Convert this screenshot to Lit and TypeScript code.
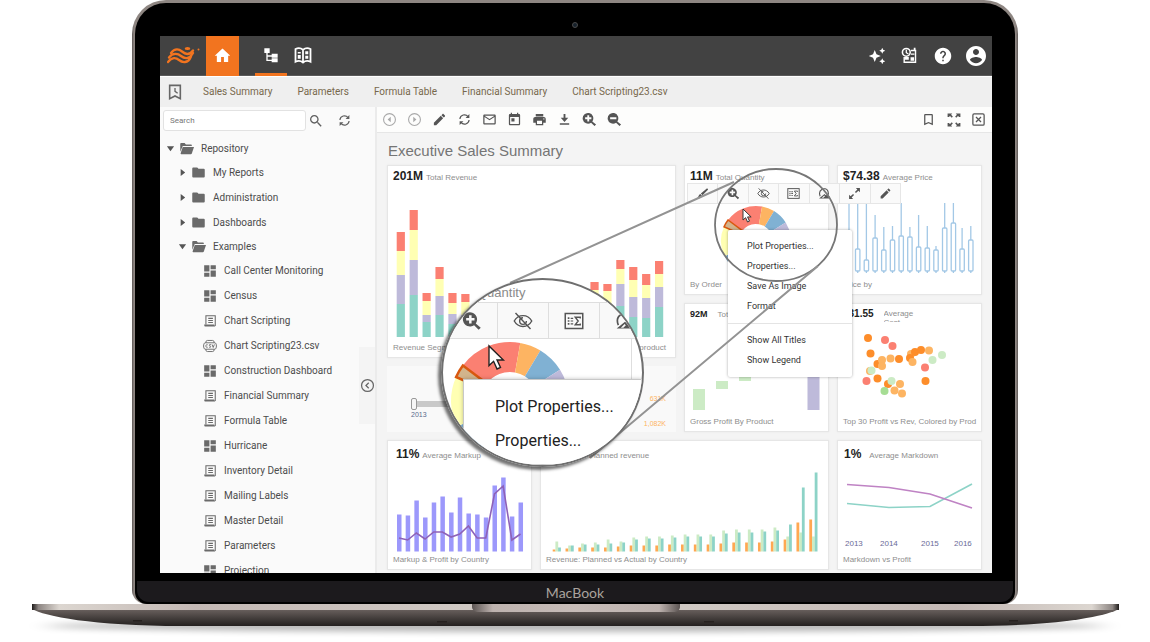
import { LitElement, html, svg, css, nothing, TemplateResult, SVGTemplateResult } from "lit";
import { customElement, property } from "lit/decorators.js";

const ICONS: Record<string, SVGTemplateResult> = {
  home: svg`<path d="M10 21v-7h4v7h6v-8.500h3L12 2 1 12.500h3V21z"/>`,
  tree: svg`<path d="M2 2h8v7H7v3.500h6V10h9v6h-9v-1.500H7V19h6v-2h9v6h-9v-2H5V9H2z"/>`,
  book: svg`<path fill="none" stroke="currentColor" stroke-width="2.400" d="M12 5C9 2.500 5 2.500 2 4v17c3-1.500 7-1.500 10 1 3-2.500 7-2.500 10-1V4c-3-1.500-7-1.500-10 1zM12 5v17"/><path d="M5 8h4v2H5zM5 12h4v5H5zM15 7h4v4h-4zM15 13h4v4h-4z"/>`,
  sparkle: svg`<path d="M9 4l2.300 5.700L17 12l-5.700 2.300L9 20l-2.300-5.700L1 12l5.700-2.300zM19 1l1.200 2.800L23 5l-2.800 1.200L19 9l-1.200-2.800L15 5l2.800-1.200zM19 15l1.200 2.800L23 19l-2.800 1.200L19 23l-1.200-2.800L15 19l2.800-1.200z"/>`,
  schedule: svg`<path fill="none" stroke="currentColor" stroke-width="2" d="M14 5h6.500v16.500h-16V14"/><path d="M18 1h2.500v4H18zM5 14h6v4H5z"/><circle cx="7.500" cy="7.500" r="5.500" fill="none" stroke="currentColor" stroke-width="2.200"/><path fill="none" stroke="currentColor" stroke-width="1.800" d="M7.500 4v4l3 2"/><path d="M13.500 14.500h5v5h-5zM14 9h5v2h-5z"/>`,
  help: svg`<path d="M12 1C5.900 1 1 5.900 1 12s4.900 11 11 11 11-4.900 11-11S18.100 1 12 1zm1 18h-2v-2h2v2zm2.100-7.700l-.9.900C13.400 12.900 13 13.500 13 15h-2v-.5c0-1.100.4-2.100 1.200-2.800l1.200-1.300c.4-.4.600-.9.600-1.400 0-1.100-.9-2-2-2s-2 .9-2 2H8c0-2.200 1.800-4 4-4s4 1.800 4 4c0 .9-.4 1.700-.9 2.300z"/>`,
  account: svg`<path d="M12 2C6.480 2 2 6.480 2 12s4.480 10 10 10 10-4.480 10-10S17.520 2 12 2zm0 3c1.660 0 3 1.340 3 3s-1.340 3-3 3-3-1.340-3-3 1.340-3 3-3zm0 14.200c-2.500 0-4.710-1.280-6-3.220.03-1.990 4-3.080 6-3.080 1.990 0 5.970 1.090 6 3.080-1.290 1.940-3.500 3.220-6 3.220z"/>`,
  recent: svg`<path fill="none" stroke="currentColor" stroke-width="2.400" d="M4 2h16v20l-8-4-8 4z"/><path fill="none" stroke="currentColor" stroke-width="2" d="M12 6v5l4 3"/>`,
  search: svg`<path d="M15.500 14h-.79l-.28-.27C15.410 12.590 16 11.110 16 9.500 16 5.910 13.090 3 9.500 3S3 5.910 3 9.500 5.910 16 9.500 16c1.610 0 3.090-.59 4.230-1.570l.27.28v.79l5 4.990L20.490 19l-4.990-5zm-6 0C7.010 14 5 11.990 5 9.500S7.010 5 9.500 5 14 7.010 14 9.500 11.990 14 9.500 14z"/>`,
  refresh: svg`<path fill="none" stroke="currentColor" stroke-width="2.200" d="M3.500 11A8.500 8.500 0 0 1 18.500 6.500M20.500 13A8.500 8.500 0 0 1 5.500 17.500"/><path d="M21 2v7h-7zM3 22v-7h7z"/>`,
  prev: svg`<circle cx="12" cy="12" r="9.500" fill="none" stroke="currentColor" stroke-width="1.800"/><path d="M14 7.500v9L9 12z"/>`,
  next: svg`<circle cx="12" cy="12" r="9.500" fill="none" stroke="currentColor" stroke-width="1.800"/><path d="M10 7.500v9l5-4.500z"/>`,
  edit: svg`<path d="M3 17.250V21h3.750L17.810 9.940l-3.750-3.750L3 17.250zM20.710 7.040c.39-.39.39-1.020 0-1.410l-2.340-2.340c-.39-.39-1.020-.39-1.410 0l-1.830 1.830 3.750 3.750 1.830-1.830z"/>`,
  mail: svg`<path d="M22 6c0-1.100-.9-2-2-2H4c-1.100 0-2 .9-2 2v12c0 1.100.9 2 2 2h16c1.100 0 2-.9 2-2V6zm-2 0l-8 5-8-5h16zm0 12H4V8l8 5 8-5v10z"/>`,
  event: svg`<path d="M19 3h-1V1h-2v2H8V1H6v2H5c-1.110 0-1.990.9-1.990 2L3 19c0 1.100.89 2 2 2h14c1.100 0 2-.9 2-2V5c0-1.100-.9-2-2-2zm0 16H5V8h14v11zM7 10h5v5H7z"/>`,
  print: svg`<path d="M19 8H5c-1.660 0-3 1.340-3 3v6h4v4h12v-4h4v-6c0-1.660-1.340-3-3-3zm-3 11H8v-5h8v5zm3-7c-.55 0-1-.45-1-1s.45-1 1-1 1 .45 1 1-.45 1-1 1zm-1-9H6v4h12V3z"/>`,
  download: svg`<path d="M18 9h-4.500V3h-3v6H6l6 7 6-7zM4.500 18v2.500h15V18z"/>`,
  zoomin: svg`<path d="M16.500 15A8.500 8.500 0 1 0 14.500 17L20 22.500l2.500-2.500zM8.500 5h3v3.500H15v3h-3.500V15h-3v-3.500H5v-3h3.500z"/>`,
  zoomout: svg`<path d="M16.500 15A8.500 8.500 0 1 0 14.500 17L20 22.500l2.500-2.500zM5 8.500h10v3H5z"/>`,
  bookmark: svg`<path d="M17 3H7c-1.100 0-1.990.9-1.990 2L5 21l7-3 7 3V5c0-1.100-.9-2-2-2zm0 15l-5-2.180L7 18V5h10v13z"/>`,
  full: svg`<path d="M1 1h8L7 3.200l3 3L8.200 8l-3-3L3 7v0H1zM23 1h-8l2 2.200-3 3L15.800 8l3-3L21 7h2zM1 23h8l-2-2.200 3-3L8.200 16l-3 3L3 17H1zM23 23h-8l2-2.200-3-3 1.800-1.800 3 3 2.200-2h2z"/>`,
  close: svg`<rect x="3" y="3" width="18" height="18" rx="2" fill="none" stroke="currentColor" stroke-width="2"/><path fill="none" stroke="currentColor" stroke-width="2" d="M8 8l8 8M16 8l-8 8"/>`,
  folder: svg`<path d="M10 4H3.500C2.600 4 2 4.600 2 5.500v13c0 .9.600 1.500 1.500 1.500h17c.9 0 1.500-.6 1.500-1.500v-11c0-.9-.6-1.500-1.500-1.500H12z"/>`,
  folderopen: svg`<path d="M2 17V4.500C2 3.600 2.600 3 3.500 3H9l2 2.500h8c.8 0 1.500.7 1.500 1.500v1H6z"/><path d="M6 9.500h18L20.500 20c-.2.600-.8 1-1.500 1H3.500c-.5 0-1-.3-1-1z"/>`,
  dash: svg`<path d="M2 2h9v11H2zM2 15h9v7H2zM13 2h9v7h-9zM13 11h9v11h-9z"/>`,
  report: svg`<path fill="none" stroke="currentColor" stroke-width="1.800" d="M5 18V3h16v17.500M9 7.500h8M9 11h8M9 14.500h8"/><path d="M2 18h17l2 3.500H4c-1.300 0-2-1.500-2-3.500z"/>`,
  csv: svg`<path fill="none" stroke="currentColor" stroke-width="1.600" d="M5 6.500V5c0-1.500 1-2.500 2.500-2.500h9C18 2.500 19 3.500 19 5v1.500M5 17.500V19c0 1.500 1 2.500 2.500 2.500h9c1.500 0 2.500-1 2.500-2.500v-1.500M3.500 6.500h17c1.500 0 2.500 3 2.500 5.500s-1 5.500-2.500 5.500h-17C2 17.500 1 14.500 1 12s1-5.500 2.500-5.500zM8 10c-1.200-1-3-.2-3 2s1.800 3 3 2M13.500 9.700c-3-1-4 1.300-1.700 2.100 2.700.8 1.700 3.400-1.300 2.200M15.500 9.300l2 5.200 2-5.200"/>`,
  collapse: svg`<circle cx="12" cy="12" r="9.500" fill="none" stroke="currentColor" stroke-width="2"/><path fill="none" stroke="currentColor" stroke-width="2" d="M14 7.500L9.500 12l4.500 4.500"/>`,
  brush: svg`<path d="M20.500 2.500l2 2L12 15l-3-3zM8 13l3 3c-1 4-5 5.500-9 4.500 3-1.500 2.500-6.500 6-7.500z"/>`,
  eyeoff: svg`<path fill="none" stroke="currentColor" stroke-width="1.700" d="M1.500 12C4 7.500 8 5.500 12 5.500s8 2 10.500 6.500C20 16.500 16 18.500 12 18.500S4 16.500 1.500 12zM3 2.500l18 19"/><path fill="none" stroke="currentColor" stroke-width="1.700" d="M12 8a4 4 0 1 0 4 4"/>`,
  summary: svg`<rect x="1.500" y="3" width="21" height="18" fill="none" stroke="currentColor" stroke-width="1.800"/><path d="M4.500 7.500h2v2h-2zM4.500 11h2v2h-2zM4.500 14.500h2v2h-2zM8 8h3v1.500H8zM8 11.300h3v1.400H8zM8 14.600h3v1.500H8z"/><path fill="none" stroke="currentColor" stroke-width="1.700" d="M19.500 9V7.500h-6l3.500 4.500-3.500 4.500h6V15"/>`,
  bell: svg`<path fill="none" stroke="currentColor" stroke-width="2" d="M4 17c-2-5-1-10 3-12.500 4-2.300 9-1.500 11 2.500 1 2.500 1 5 1.500 7"/><path d="M2 21l10-8 3 2.500 2-2.500 5 5.500V21zM7 20h3l3-3-1.500-1.500z" fill-rule="evenodd"/>`,
  expand: svg`<path d="M22 2v7.500l-2.800-2.800-4.500 4.500-1.900-1.900 4.500-4.500L14.500 2zM2 22v-7.500l2.800 2.800 4.500-4.500 1.900 1.900-4.500 4.500L9.500 22z"/>`,
};

function icon(name: string, size = 14): TemplateResult {
  return html`<svg viewBox="0 0 24 24" width=${size} height=${size} fill="currentColor" aria-hidden="true">${ICONS[name]}</svg>`;
}

function sector(cx: number, cy: number, R: number, r: number, from: number, to: number): string {
  const at = (rad: number, deg: number) => {
    const a = (deg * Math.PI) / 180;
    return `${(cx + rad * Math.sin(a)).toFixed(2)} ${(cy - rad * Math.cos(a)).toFixed(2)}`;
  };
  return `M${at(R, from)}A${R} ${R} 0 0 1 ${at(R, to)}L${at(r, to)}A${r} ${r} 0 0 0 ${at(r, from)}Z`;
}

function donut(cx: number, cy: number, R: number, r: number, stroke: number) {
  const parts: [number, number, string][] = [
    [-150, -116, "#80b1d3"],
    [-116, -66, "#ffffb3"],
    [-53, 10, "#fb8072"],
    [10, 31, "#fdb462"],
    [31, 58, "#80b1d3"],
    [58, 110, "#bebada"],
  ];
  return svg`${parts.map(([a, b, c]) => svg`<path d=${sector(cx, cy, R, r, a, b)} fill=${c} />`)}
    <path d=${sector(cx, cy, R, r, -66, -53)} fill="#d2b48c" stroke="#d9580f" stroke-width=${stroke} />`;
}

const CURSOR = "M0 0v17l4-3.700 3 6.700 3-1.300-3-6.500h5.500z";

/* Stacked revenue columns: slot, then top edge of each band down to the base. */
const REVENUE: number[][] = [
  [0, 232, 251, 275, 304], [1, 210, 230, 260, 295], [2, 293, 301, 315, 322], [3, 267, 279, 296, 315],
  [4, 293, 303, 314, 324], [5, 294, 302, 315, 325], [15, 282, 290, 305, 320], [16, 284, 291, 305, 320],
  [17, 260, 269, 284, 306], [18, 267, 280, 297, 317], [19, 274, 285, 298, 318], [20, 261, 274, 287, 307],
];
const BANDS = ["#fb8072", "#ffffb3", "#bebada", "#8dd3c7"];

const MARKUP_BARS = [37, 36, 51, 34, 49, 55, 39, 54, 38, 37, 34, 66, 74, 35, 49];
const MARKUP_LINE = [13, 11, 18, 12, 19, 19, 14, 17, 25, 13, 13, 57, 65, 11, 17];

const PLANNED: number[][] = [
  [2, 10, 4], [3, 6, 6], [4, 8, 7], [4, 9, 7], [4, 12, 8], [5, 10, 9], [6, 14, 12], [6, 15, 13], [6, 15, 13],
  [7, 16, 14], [7, 17, 15], [7, 17, 15], [7, 17, 15], [8, 21, 18], [9, 22, 19], [9, 22, 19], [9, 22, 20],
  [10, 24, 21], [12, 15, 27], [29, 19, 64], [32, 15, 79],
];
const PLANNED_COLORS = ["#ffa852", "#ccebc5", "#8dd3c7"];

const BOXES: number[][] = [
  [204, 240], [204, 249], [204, 260], [215, 238], [227, 250], [226, 240], [203, 236], [227, 237],
  [215, 247], [226, 248], [246, 250], [203, 228], [203, 223], [228, 249], [226, 240],
];

const DOTS: [number, number, string][] = [
  [868, 338, "o"], [885, 340, "r"], [892.5, 346, "r"], [870.5, 353.500, "o"], [877.5, 364, "o"], [882, 360, "l"],
  [882, 366, "l"], [890.5, 358.500, "l"], [899, 359, "o"], [911, 354, "l"], [910, 358, "o"], [915, 352, "o"],
  [912.5, 362, "l"], [921, 350, "o"], [929, 350.500, "l"], [942, 355, "g"], [932.5, 360, "g"], [925, 367.500, "r"],
  [870, 371, "l"], [871.5, 370.500, "g"], [866.5, 381, "r"], [877.5, 378.500, "o"], [888, 384, "o"],
  [891.5, 381, "g"], [900, 384, "l"], [884.5, 391, "d"], [894.5, 390.500, "l"], [902, 393.500, "l"], [925.5, 381, "o"],
];
const DOT_COLORS: Record<string, string> = { o: "#fd8d2a", l: "#fdb462", r: "#fb8072", g: "#ccebc5", d: "#a6dd94" };

interface Row { label: string; level: number; kind: string; arrow?: string }
const ROWS: Row[] = [
  { label: "Repository", level: 0, kind: "folderopen", arrow: "open" },
  { label: "My Reports", level: 1, kind: "folder", arrow: "shut" },
  { label: "Administration", level: 1, kind: "folder", arrow: "shut" },
  { label: "Dashboards", level: 1, kind: "folder", arrow: "shut" },
  { label: "Examples", level: 1, kind: "folderopen", arrow: "open" },
  { label: "Call Center Monitoring", level: 2, kind: "dash" },
  { label: "Census", level: 2, kind: "dash" },
  { label: "Chart Scripting", level: 2, kind: "report" },
  { label: "Chart Scripting23.csv", level: 2, kind: "csv" },
  { label: "Construction Dashboard", level: 2, kind: "dash" },
  { label: "Financial Summary", level: 2, kind: "report" },
  { label: "Formula Table", level: 2, kind: "report" },
  { label: "Hurricane", level: 2, kind: "dash" },
  { label: "Inventory Detail", level: 2, kind: "report" },
  { label: "Mailing Labels", level: 2, kind: "report" },
  { label: "Master Detail", level: 2, kind: "report" },
  { label: "Parameters", level: 2, kind: "report" },
  { label: "Projection", level: 2, kind: "dash" },
];

const reset = css`
  * { box-sizing: border-box; }
  button { border: 0; padding: 0; margin: 0; background: none; font: inherit; color: inherit; display: flex; align-items: center; justify-content: center; }
  svg { display: block; flex: none; }
`;

@customElement("report-tree")
export class ReportTree extends LitElement {
  static styles = [reset, css`
    :host { display: flex; flex-direction: column; position: relative; width: 217px; flex: none; background: #fafafa; border-right: 2px solid #ebebeb; overflow: hidden; color: #606060; }
    .find { display: flex; align-items: center; padding: 3px; height: 27px; }
    .box { width: 143px; height: 21px; border: 1px solid #e2e2e2; border-radius: 3px; background: #fff; padding: 0 6px; font: 8px Roboto, sans-serif; color: #666; outline: none; }
    .box::placeholder { color: #777; opacity: 1; }
    .tool { width: 20px; height: 20px; }
    .tool + .tool { margin-left: 8px; }
    ul { list-style: none; margin: 3px 0 0; padding: 0; }
    .row { height: 25px; width: 100%; justify-content: flex-start; font: 10px/14px Roboto, sans-serif; color: #4c4c4c; white-space: nowrap; }
    .open { height: 23px; }
    .l0 { padding-left: 6px; }
    .l1 { padding-left: 18px; }
    .l2 { padding-left: 43px; }
    .arrow { width: 9px; margin-right: 4px; color: #555; }
    .glyph { display: flex; color: #6a6a6a; margin-right: 7px; }
    .fold { position: absolute; right: 0; top: 240px; width: 16px; height: 77px; background: #f4f4f4; color: #666; }
  `];

  render() {
    return html`
      <div class="find">
        <input class="box" type="text" placeholder="Search" aria-label="Search" />
        <button class="tool" aria-label="Find">${icon("search", 16)}</button>
        <button class="tool" aria-label="Refresh">${icon("refresh", 13)}</button>
      </div>
      <ul>
        ${ROWS.map((r) => html`<li>
          <button class="row l${r.level} ${r.arrow ?? ""}">
            ${r.arrow ? html`<svg class="arrow" viewBox="0 0 10 10" height="9" fill="currentColor"><path d=${r.arrow === "open" ? "M1 2.500h8L5 8z" : "M3 1v8l5-4z"} /></svg>` : nothing}
            <span class="glyph">${icon(r.kind, r.level === 2 ? 14 : 15)}</span>${r.label}
          </button></li>`)}
      </ul>
      <button class="fold" aria-label="Collapse panel">${icon("collapse", 15)}</button>`;
  }
}

@customElement("metric-card")
export class MetricCard extends LitElement {
  @property() value = "";
  @property() label = "";
  @property() caption = "";
  @property() tail = "";
  static styles = [reset, css`
    :host { display: flex; flex-direction: column; min-width: 0; min-height: 0; background: #fff; border: 1px solid #e6e6e6; box-shadow: 0 0 2px #e8e8e8; font-family: "Liberation Sans", Arial, sans-serif; color: #8e8e8e; overflow: hidden; padding: 3px 0 4px; }
    .head { display: flex; align-items: baseline; gap: 3px; height: 14px; line-height: 14px; padding: 0 5px; font-size: 8px; white-space: nowrap; }
    .value { font-size: 12px; font-weight: 700; color: #222; }
    :host([small]) .value { font-size: 9px; }
    :host([small]) .head { gap: 10px; }
    :host([low]) .head { height: 20px; line-height: 20px; padding-left: 8px; }
    :host([spaced]) .head { gap: 8px; padding-left: 6px; }
    :host([clipped]) .value { font-size: 10px; }
    :host([clipped]) .label { align-self: flex-start; margin-top: 1px; width: 44px; height: 14px; line-height: 9px; padding-top: 1px; white-space: normal; overflow: hidden; }
    .plot { flex: 1; min-height: 0; display: flex; flex-direction: column; }
    .foot { display: flex; justify-content: space-between; height: 10px; line-height: 10px; font-size: 8px; padding: 0 9px 0 5px; white-space: nowrap; }
  `];
  render() {
    return html`
      <div class="head"><span class="value">${this.value}</span><span class="label">${this.label}</span></div>
      <div class="plot"><slot></slot></div>
      <div class="foot"><span>${this.caption}</span><span>${this.tail}</span></div>`;
  }
}

@customElement("sales-board")
export class SalesBoard extends LitElement {
  static styles = [reset, css`
    :host { display: block; position: relative; flex: 1; min-height: 0; overflow: hidden; background: #f4f4f4; padding: 9px 10px 0; font-family: Roboto, sans-serif; }
    h1 { margin: 0 0 5px; padding-left: 1px; font: 15px/18px "Liberation Sans", Arial, sans-serif; color: #757575; }
    .grid { display: grid; grid-template-columns: 145fr 136fr 145fr 145fr; grid-template-rows: 130px 129px 130px; gap: 8px; }
    .left { grid-column: 1 / 3; grid-row: 1 / 3; display: flex; flex-direction: column; gap: 8px; }
    .left metric-card { flex: 1; }
    .wide { grid-column: 2 / 4; }
    .chart { width: 100%; flex: 1; min-height: 0; display: block; }
    .years { display: grid; grid-template-columns: 35fr 41fr 33fr 27fr; padding: 0 0 0 7px; margin-bottom: 6px; font: 8px/10px "Liberation Sans", Arial, sans-serif; color: #6b6b98; }
    .range { height: 66px; background: #f9f9f9; display: flex; justify-content: space-between; padding: 6px 10px 4px 24px; font: 7px/9px "Liberation Sans", Arial, sans-serif; color: #5a6b8c; }
    .range label { display: flex; flex-direction: column; width: 120px; padding-top: 26px; }
    .range input { order: -1; appearance: none; width: 100%; height: 12px; margin: 0; background: linear-gradient(transparent 3px, #c9c9c9 3px, #c9c9c9 9px, transparent 9px); }
    .range input::-webkit-slider-thumb { appearance: none; width: 6px; height: 12px; border: 1px solid #999; border-radius: 2px; background: #f6f6f6; }
    .totals { display: flex; flex-direction: column; justify-content: space-between; padding: 22px 0 0; text-align: right; color: #fdb462; }
    .hover { position: absolute; left: 310px; top: 50px; width: 214px; height: 21px; display: flex; background: #fafafa; border: 1px solid #e6e6e6; color: #555; }
    .hover button { flex: 1; }
    .hover button + button { border-left: 1px solid #e6e6e6; }
    .menu { position: absolute; left: 351px; top: 97px; width: 124px; height: 147px; background: #fff; border-radius: 2px; box-shadow: 0 0 3px rgba(0, 0, 0, 0.35); padding: 6px 0; }
    .menu button { width: 100%; height: 20px; justify-content: flex-start; padding-left: 19px; font: 9px/20px Roboto, sans-serif; color: #333; }
    .menu hr { border: 0; border-top: 1px solid #e4e4e4; margin: 7px 0 6px; }
    .over { position: absolute; left: 0; top: 0; }
    .lens { position: absolute; left: 64px; top: 145px; width: 203px; height: 189px; border-radius: 50%; border: 2px solid #6f6f6f; background: #fff; overflow: hidden; }
    .shade { position: absolute; left: 64px; top: 145px; width: 203px; height: 189px; border-radius: 50%; box-shadow: -3px 3px 3px rgba(0, 0, 0, 0.55); }
    .name { height: 22px; padding-left: 34px; font: 13px/26px "Liberation Sans", Arial, sans-serif; color: #8a8a8a; }
    .tools { display: flex; height: 37px; background: #f9f9f9; border: 1px solid #dedede; border-width: 1px 0; color: #555; margin-left: 3px; }
    .tools button { width: 51px; height: 35px; flex: none; }
    .tools button + button { border-left: 1px solid #dedede; }
    .pie { display: block; }
    .zoomed { position: absolute; left: 20px; top: 99px; right: 0; bottom: 0; background: #fff; border: 1px solid #c8c8c8; box-shadow: 0 0 4px rgba(0, 0, 0, 0.25); padding: 10px 0 0 31px; }
    .zoomed button { height: 34px; font: 16px/34px Roboto, sans-serif; color: #222; }
  `];

  render() {
    const markX = (i: number) => 397 + i * 8.68;
    return html`
      <h1>Executive Sales Summary</h1>
      <div class="grid">
        <div class="left">
          <metric-card value="201M" label="Total Revenue" caption="Revenue Segment" tail="product">
            <svg class="chart" viewBox="388 183 287 160" preserveAspectRatio="none">
              ${REVENUE.map(([n, ...tops]) => tops.map((t, k) => svg`<rect x=${396.700 + n * 12.915} width="8.200" y=${t} height=${(tops[k + 1] ?? 337) - t} fill=${BANDS[k]} />`))}
            </svg>
          </metric-card>
          <div class="range">
            <label>2013<input type="range" min="2013" max="2016" value="2013" /></label>
            <div class="totals"><span>631K</span><span>1,082K</span></div>
          </div>
        </div>
        <metric-card value="11M" label="Total Quantity" caption="By Order">
          <svg class="chart" viewBox="685 183 143 97" preserveAspectRatio="none">${donut(756, 241, 35, 17, 1.500)}</svg>
        </metric-card>
        <metric-card value="$74.38" label="Average Price" caption="Price by">
          <svg class="chart" viewBox="838 183 143 97" preserveAspectRatio="none">
            ${BOXES.map(([w, b], i) => svg`<g stroke="#a3c8e6" fill="#fff" stroke-width="1.300"><path d=${`M${849 + i * 8.700} ${w}V273`} /><rect x=${846.800 + i * 8.700} y=${b} width="4.400" height=${271 - b} rx="1" /></g>`)}
          </svg>
        </metric-card>
        <metric-card small value="92M" label="Total Profit" caption="Gross Profit By Product">
          <svg class="chart" viewBox="685 321 143 96" preserveAspectRatio="none">
            <path fill="#ccebc5" d="M693 389h12v21h-12zM716 381h12v8h-12zM739 372h12v9h-12z" />
            <path fill="#bebada" d="M807.500 340h12v70h-12z" />
          </svg>
        </metric-card>
        <metric-card small clipped value="$31.55" label="Average Cost" caption="Top 30 Profit vs Rev, Colored by Prod">
          <svg class="chart" viewBox="838 321 143 96" preserveAspectRatio="none">
            ${DOTS.map(([x, y, c]) => svg`<circle cx=${x} cy=${y} r="4" fill=${DOT_COLORS[c]} />`)}
          </svg>
        </metric-card>
        <metric-card low value="11%" label="Average Markup" caption="Markup &amp; Profit by Country">
          <svg class="chart" viewBox="388 464 143 91" preserveAspectRatio="none">
            ${MARKUP_BARS.map((h, i) => svg`<rect x=${markX(i)} y=${551.500 - h} width="4.500" height=${h} fill="#9c98fb" />`)}
            <polyline fill="none" stroke="#8e62b8" stroke-width="1.600" points=${MARKUP_LINE.map((h, i) => `${markX(i) + 2},${551 - h}`).join(" ")} />
          </svg>
        </metric-card>
        <metric-card low class="wide" value="$101M" label="Planned revenue" caption="Revenue: Planned vs Actual by Country">
          <svg class="chart" viewBox="541 464 287 91" preserveAspectRatio="none">
            ${PLANNED.map((g, i) => g.map((h, k) => svg`<rect x=${552.700 + i * 12.830 + k * 2.700} y=${551.500 - h} width="2.800" height=${h} fill=${PLANNED_COLORS[k]} />`))}
          </svg>
        </metric-card>
        <metric-card low spaced value="1%" label="Average Markdown" caption="Markdown vs Profit">
          <svg class="chart" viewBox="838 464 143 75" preserveAspectRatio="none" fill="none" stroke-width="1.700">
            <path stroke="#8dd3c7" d="M847 503.500L889 507.500L930 506.500L972 484" />
            <path stroke="#bf83c4" d="M847 484.500L889 487.500L930 494L972 508" />
          </svg>
          <div class="years"><span>2013</span><span>2014</span><span>2015</span><span>2016</span></div>
        </metric-card>
      </div>

      <div class="hover">
        ${["brush", "zoomin", "eyeoff", "summary", "bell", "expand", "edit"].map((n) => html`<button aria-label=${n}>${icon(n, 13)}</button>`)}
      </div>
      <div class="menu">
        <button>Plot Properties...</button><button>Properties...</button><button>Save As Image</button><button>Format</button>
        <hr />
        <button>Show All Titles</button><button>Show Legend</button>
      </div>
      <svg class="over" viewBox="377 133 615 440" width="615" height="440" fill="none" stroke="#8c8c8c">
        <path d=${CURSOR} transform="translate(743 209) scale(.65)" fill="#fff" stroke="#333" stroke-width="1.500" />
        <ellipse cx="776" cy="225" rx="61" ry="56" stroke="#777" stroke-width="1.800" />
        <path d="M734 182L510 283M818 266L590 458" stroke="#939393" stroke-width="2" />
      </svg>
      <div class="shade"></div>
      <div class="lens">
        <div class="name">Quantity</div>
        <div class="tools">
          ${["zoomin", "eyeoff", "summary", "bell"].map((n) => html`<button aria-label=${n}>${icon(n, 20)}</button>`)}
        </div>
        <svg class="pie" viewBox="443 338 199 130" width="199" height="130">${donut(510, 400, 59, 29, 2.500)}<path stroke="#dedede" d="M631.500 338v60" /></svg>
        <div class="zoomed"><button>Plot Properties...</button><button>Properties...</button></div>
        <svg class="over" viewBox="443 280 199 185" width="199" height="185"><path d=${CURSOR} transform="translate(489 346) scale(1.15)" fill="#fff" stroke="#222" stroke-width="1.200" /></svg>
      </div>`;
  }
}

@customElement("app-root")
export class AppRoot extends LitElement {
  static styles = [reset, css`
    :host { display: block; min-height: 100vh; background: #fff; font-family: Roboto, sans-serif; overflow: hidden; }
    .lid { margin: 0 132px; padding: 3px 3px 0; border-radius: 34px 34px 14px 14px; background: linear-gradient(90deg, #5c5654, #8e8682 2px, #8e8682 calc(100% - 2px), #5c5654); }
    .bezel { background: #000; border-radius: 31px 31px 12px 12px; padding: 0 2px 2px; overflow: hidden; }
    .camera { height: 33px; display: flex; justify-content: center; padding-top: 19px; }
    .camera i { width: 6px; height: 6px; border-radius: 50%; background: #16212b; border: 1px solid #4a4a4a; }
    .screen { margin: 0 21px 0 23px; height: calc(100vh - 105px); min-height: 400px; display: flex; flex-direction: column; overflow: hidden; background: #fafafa; }
    .chin { margin-top: 8px; height: 21px; background: #1c1a1d; border-radius: 0 0 12px 12px; text-align: center; font: 14px/23px Lato, sans-serif; color: #aaa39e; }
    header { display: flex; height: 40px; flex: none; background: #424242; border-bottom: 1px solid #5a5a5a; color: #fff; }
    .logo { width: 46px; display: flex; align-items: center; padding-left: 7px; }
    .nav { width: 32px; height: 40px; border-bottom: 3px solid transparent; padding-top: 1px; }
    .home { width: 33px; background: #f2741f; margin-right: 16px; border-color: #f2741f; }
    .on { border-bottom-color: #f2741f; }
    .grow { flex: 1; }
    .act { width: 33px; height: 39px; }
    .tabs { display: flex; align-items: center; gap: 25px; height: 31px; flex: none; border-top: 1px solid #fff; background: #efefef; padding-left: 7px; color: #666; }
    .tabs a { color: #77684c; text-decoration: none; font-size: 10px; line-height: 14px; white-space: nowrap; }
    .tabs button { margin-right: -5px; }
    .body { display: flex; flex: 1; min-height: 0; }
    main { flex: 1; min-width: 0; display: flex; flex-direction: column; }
    .bar { display: flex; height: 26px; flex: none; background: #fdfdfc; border-bottom: 1px solid #e6e6e6; color: #555; padding: 0 1px 0 0; }
    .bar button { width: 25px; height: 25px; }
    .bar .dim { color: #aaa; }
    .base { width: 100%; height: 38px; }
  `];

  render() {
    return html`
      <div class="lid"><div class="bezel">
        <div class="camera"><i></i></div>
        <div class="screen">
          <header>
            <div class="logo"><svg viewBox="0 0 33 20" width="33" height="20" fill="none" stroke="#f2741f" stroke-width="2.300" stroke-linecap="round">
              <path d="M4 7c4-5 8-4 11-1.500s7 4.500 11-1M2 11.500c4-5 9-4 12-1.500s8 4 12-3M1 16c4-5 8-4.500 11-2s9 4 12-3.500" /><ellipse cx="20.500" cy="2.500" rx="2.800" ry="1.500" fill="#f2741f" stroke="none" /><circle cx="31.500" cy="3.500" r="1" fill="#f2741f" stroke="none" />
            </svg></div>
            <button class="nav home" aria-label="Home">${icon("home", 17)}</button>
            <button class="nav on" aria-label="Repository">${icon("tree", 16)}</button>
            <button class="nav" aria-label="Library">${icon("book", 18)}</button>
            <div class="grow"></div>
            <button class="act" aria-label="Assistant">${icon("sparkle", 18)}</button>
            <button class="act" aria-label="Schedule">${icon("schedule", 17)}</button>
            <button class="act" aria-label="Help">${icon("help", 18)}</button>
            <button class="act" aria-label="Account">${icon("account", 24)}</button>
          </header>
          <nav class="tabs">
            <button aria-label="Recent">${icon("recent", 16)}</button>
            <a href="#">Sales Summary</a><a href="#">Parameters</a><a href="#">Formula Table</a><a href="#">Financial Summary</a><a href="#">Chart Scripting23.csv</a>
          </nav>
          <div class="body">
            <report-tree></report-tree>
            <main>
              <div class="bar">
                <button class="dim" aria-label="Previous">${icon("prev", 15)}</button>
                <button class="dim" aria-label="Next">${icon("next", 15)}</button>
                ${["edit", "refresh", "mail", "event", "print", "download", "zoomin", "zoomout"].map((n) => html`<button aria-label=${n}>${icon(n, n === "refresh" ? 13 : 15)}</button>`)}
                <div class="grow"></div>
                ${["bookmark", "full", "close"].map((n) => html`<button aria-label=${n}>${icon(n, n === "full" ? 14 : 15)}</button>`)}
              </div>
              <sales-board></sales-board>
            </main>
          </div>
        </div>
        <div class="chin">MacBook</div>
      </div></div>
      <svg class="base" viewBox="0 604 1150 38" preserveAspectRatio="none">
        <defs>
          <linearGradient id="lip"><stop offset="0" stop-color="#1f1c1b" /><stop offset=".006" stop-color="#8d8683" /><stop offset=".025" stop-color="#dcd6d0" /><stop offset=".15" stop-color="#c3b8b4" /><stop offset=".4" stop-color="#cfc8c3" /><stop offset=".6" stop-color="#cfc8c3" /><stop offset=".85" stop-color="#c3b8b4" /><stop offset=".975" stop-color="#dcd6d0" /><stop offset=".994" stop-color="#8d8683" /><stop offset="1" stop-color="#1f1c1b" /></linearGradient>
          <linearGradient id="under" x2="0" y2="1"><stop offset="0" stop-color="#6b625f" /><stop offset=".6" stop-color="#3f3a38" /><stop offset="1" stop-color="#24201f" /></linearGradient>
          <linearGradient id="notch"><stop offset="0" stop-color="#5c5553" /><stop offset=".1" stop-color="#bdb2ae" /><stop offset=".5" stop-color="#c6bbb7" /><stop offset=".9" stop-color="#bdb2ae" /><stop offset="1" stop-color="#5c5553" /></linearGradient>
          <filter id="soft" x="-10%" y="-200%" width="120%" height="500%"><feGaussianBlur stdDeviation="12 3" /></filter>
        </defs>
        <ellipse cx="575" cy="626" rx="530" ry="6" fill="#000" opacity=".28" filter="url(#soft)" />
        <path fill="url(#under)" d="M32 609h1087c-12 7-60 17-150 17H182C92 626 44 616 32 609z" />
        <path fill="url(#lip)" d="M32 604h1087v6H32z" />
        <path fill="url(#notch)" d="M472 604h208v3c0 3-3 5-7 5H479c-4 0-7-2-7-5z" />
        <path fill="#26211f" d="M133 620h9v1.500h-9zM437 621h10v1.500h-10zM704 621h10v1.500h-10zM1009 620h9v1.500h-9z" />
      </svg>`;
  }
}
